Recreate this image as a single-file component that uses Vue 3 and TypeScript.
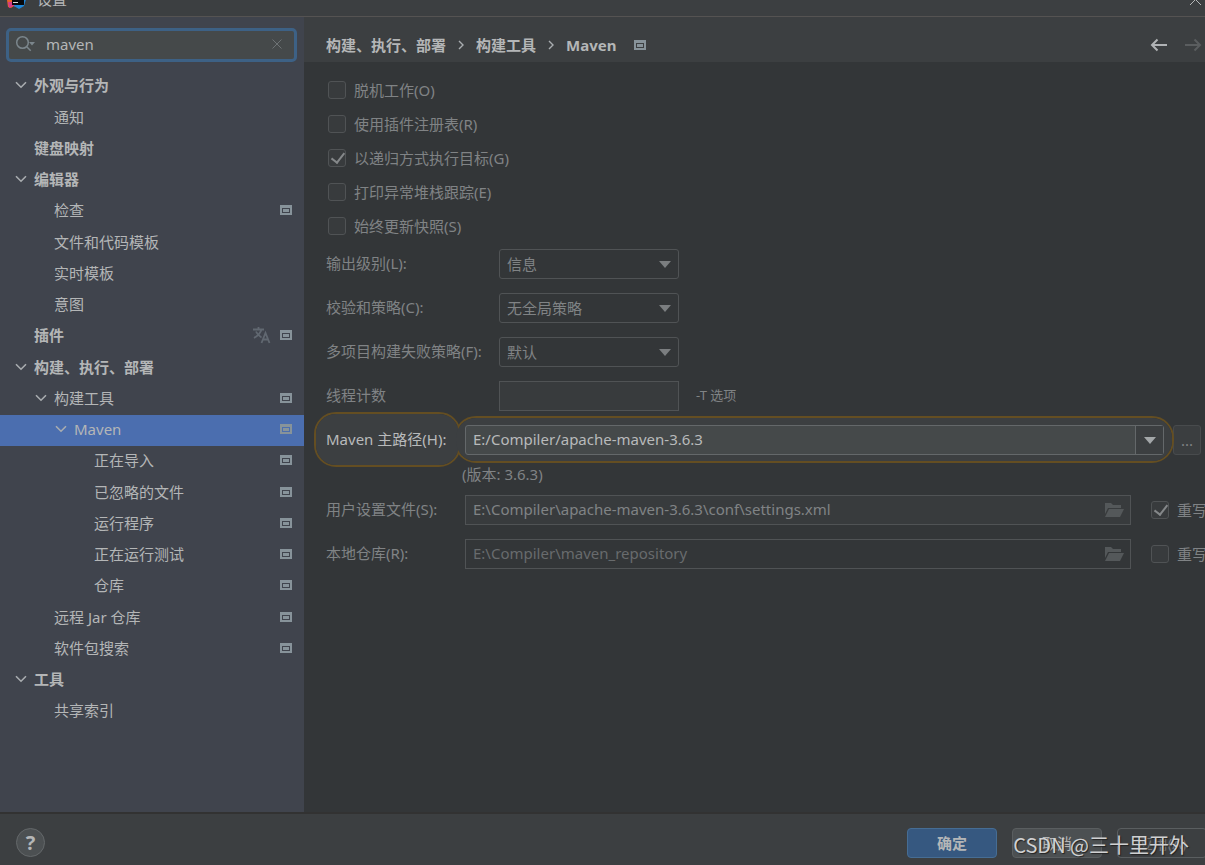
<script setup lang="ts">
import { ref } from 'vue'

interface TreeItem {
  label: string
  level: number
  open?: boolean
  project?: boolean
  translate?: boolean
}

const query = ref('maven')
const selected = ref('Maven')
const mavenHome = ref('E:/Compiler/apache-maven-3.6.3')

const tree: TreeItem[] = [
  { label: '外观与行为', level: 0, open: true },
  { label: '通知', level: 1 },
  { label: '键盘映射', level: 0 },
  { label: '编辑器', level: 0, open: true },
  { label: '检查', level: 1, project: true },
  { label: '文件和代码模板', level: 1 },
  { label: '实时模板', level: 1 },
  { label: '意图', level: 1 },
  { label: '插件', level: 0, project: true, translate: true },
  { label: '构建、执行、部署', level: 0, open: true },
  { label: '构建工具', level: 1, open: true, project: true },
  { label: 'Maven', level: 2, open: true, project: true },
  { label: '正在导入', level: 3, project: true },
  { label: '已忽略的文件', level: 3, project: true },
  { label: '运行程序', level: 3, project: true },
  { label: '正在运行测试', level: 3, project: true },
  { label: '仓库', level: 3, project: true },
  { label: '远程 Jar 仓库', level: 1, project: true },
  { label: '软件包搜索', level: 1, project: true },
  { label: '工具', level: 0, open: true },
  { label: '共享索引', level: 1 },
]

const options = [
  { label: '脱机工作(O)', checked: false },
  { label: '使用插件注册表(R)', checked: false },
  { label: '以递归方式执行目标(G)', checked: true },
  { label: '打印异常堆栈跟踪(E)', checked: false },
  { label: '始终更新快照(S)', checked: false },
]

const selects = [
  { id: 'output', label: '输出级别(L):', value: '信息' },
  { id: 'checksum', label: '校验和策略(C):', value: '无全局策略' },
  { id: 'failure', label: '多项目构建失败策略(F):', value: '默认' },
]

const files = [
  { id: 'settings', label: '用户设置文件(S):', value: 'E:\\Compiler\\apache-maven-3.6.3\\conf\\settings.xml', override: true },
  { id: 'repository', label: '本地仓库(R):', value: 'E:\\Compiler\\maven_repository', override: false },
]
</script>

<template>
  <div class="window">
    <header class="titlebar">
      <svg class="logo" width="20" height="20" viewBox="0 0 20 20" aria-hidden="true">
        <path d="M0 4 8 0v16l-4 3-3-1L0 11z" fill="#e8622a" />
        <path d="M1 13h6l3 5-4-1-4 2z" fill="#d43a86" />
        <path d="M10 0l7 3 3 4-3 10-5 3-5-3z" fill="#1d86d6" />
        <path d="M5 3h12v13H5z" fill="#08080a" />
        <path d="M6 13h5v1H6z" fill="#d8d8d8" />
      </svg>
      <span class="title">设置</span>
      <button class="close" aria-label="关闭">
        <svg width="13" height="13" viewBox="0 0 13 13"><path d="M1 1l11 11M12 1 1 12" /></svg>
      </button>
    </header>

    <div class="body">
      <aside class="sidebar">
        <div class="search">
          <svg class="lens" width="22" height="18" viewBox="0 0 22 18" aria-hidden="true">
            <circle cx="7.5" cy="7.5" r="5.8" />
            <path d="M11.7 11.7l4 4" />
            <path class="tri" d="M14 7h6l-3 3.500z" />
          </svg>
          <input v-model="query" type="text" aria-label="搜索设置" />
          <button aria-label="清除" @click="query = ''">
            <svg width="12" height="12" viewBox="0 0 12 12"><path d="M1.500 1.500l9 9M10.500 1.500l-9 9" /></svg>
          </button>
        </div>
        <ul class="tree">
          <li v-for="item in tree" :key="item.label">
            <button
              :class="['node', 'level-' + item.level, { selected: item.label === selected }]"
              @click="selected = item.label"
            >
              <span class="slot">
                <svg v-if="item.open" width="12" height="8" viewBox="0 0 12 8"><path d="M1 1.200 6 6.200l5-5" /></svg>
              </span>
              <span class="name">{{ item.label }}</span>
              <svg v-if="item.translate" class="translate" width="18" height="18" viewBox="0 0 18 18">
                <path d="M0 3.500h11M5.500 1v2.500M8.500 3.500C7.500 7 4.500 10 1 12M3 5.500c1 2.500 3 4.500 5.500 6M8.500 17l4-10 4 10M10 13.500h5" />
              </svg>
              <svg v-if="item.project" class="project" width="12" height="10" viewBox="0 0 12 10">
                <path class="frame" d="M0 0h12v10H0zM2 3v5h8V3zM3 4h6v3H3z" />
              </svg>
            </button>
          </li>
        </ul>
      </aside>

      <main class="content">
        <nav class="crumbs" aria-label="路径">
          <a href="#build">构建、执行、部署</a>
          <svg class="sep" width="6" height="10" viewBox="0 0 6 10"><path d="M1 1l4 4-4 4" /></svg>
          <a href="#tools">构建工具</a>
          <svg class="sep" width="6" height="10" viewBox="0 0 6 10"><path d="M1 1l4 4-4 4" /></svg>
          <a href="#maven">Maven</a>
          <svg class="project" width="12" height="10" viewBox="0 0 12 10">
            <path class="frame" d="M0 0h12v10H0zM2 3v5h8V3zM3 4h6v3H3z" />
          </svg>
          <span class="history">
            <button aria-label="后退">
              <svg width="18" height="14" viewBox="0 0 18 14"><path d="M17 7H2M7.500 1.500 2 7l5.500 5.500" /></svg>
            </button>
            <button aria-label="前进" disabled>
              <svg width="18" height="14" viewBox="0 0 18 14"><path d="M1 7h15M10.500 1.500 16 7l-5.500 5.500" /></svg>
            </button>
          </span>
        </nav>

        <form class="form" @submit.prevent>
          <div class="checks">
            <label v-for="o in options" :key="o.label" class="check">
              <input type="checkbox" :checked="o.checked" disabled />
              <span>{{ o.label }}</span>
            </label>
          </div>

          <div class="rows">
            <div v-for="s in selects" :key="s.id" class="row">
              <label class="wide" :for="s.id">{{ s.label }}</label>
              <div class="select">
                <select :id="s.id" disabled>
                  <option>{{ s.value }}</option>
                </select>
                <svg width="12" height="7" viewBox="0 0 12 7" aria-hidden="true"><path d="M0 0h12L6 7z" /></svg>
              </div>
            </div>
            <div class="row">
              <label class="wide" for="threads">线程计数</label>
              <input id="threads" class="threads" type="text" disabled />
              <span class="hint">-T 选项</span>
            </div>
            <div class="row home">
              <span class="ring ring-label"></span>
              <span class="ring ring-field"></span>
              <span class="fill fill-label"></span>
              <span class="fill fill-field"></span>
              <label for="home">Maven 主路径(H):</label>
              <div class="combo">
                <input id="home" v-model="mavenHome" type="text" />
                <button aria-label="展开">
                  <svg width="12" height="7" viewBox="0 0 12 7"><path d="M0 0h12L6 7z" /></svg>
                </button>
              </div>
              <button class="browse">...</button>
            </div>
          </div>

          <p class="version">(版本: 3.6.3)</p>

          <div class="rows">
            <div v-for="f in files" :key="f.id" class="row">
              <label :for="f.id">{{ f.label }}</label>
              <div :class="['path', { active: f.override }]">
                <input :id="f.id" type="text" :value="f.value" disabled />
                <svg width="20" height="16" viewBox="0 0 20 16" aria-hidden="true">
                  <path d="M1 1h6l2 2h8v3H4l-3 6z" />
                  <path d="M5 7h15l-4 8H1z" />
                </svg>
              </div>
              <label class="check override">
                <input type="checkbox" :checked="f.override" disabled />
                <span>重写</span>
              </label>
            </div>
          </div>
        </form>
      </main>
    </div>

    <footer class="footer">
      <button class="help" aria-label="帮助">?</button>
      <div class="actions">
        <button class="primary">确定</button>
        <button class="cancel">取消</button>
        <button class="apply" disabled>应用(A)</button>
      </div>
      <span class="mark">CSDN @三十里开外</span>
    </footer>
  </div>
</template>

<style>
body {
  margin: 0;
  background: #3c3f41;
}
</style>

<style scoped>
* {
  box-sizing: border-box;
}
.window {
  display: flex;
  flex-direction: column;
  height: 100vh;
  overflow: hidden;
  background: #3c3f41;
  color: #b4b6b7;
  font: 15px/20px "Noto Sans", "Noto Sans CJK SC", sans-serif;
}
button,
input,
select {
  font: inherit;
  color: inherit;
  margin: 0;
  padding: 0;
  border: 0;
  border-radius: 0;
  background: none;
  outline: none;
}
svg {
  flex: none;
  display: block;
  fill: none;
  stroke: none;
}

.titlebar {
  display: flex;
  align-items: flex-end;
  flex: none;
  height: 17px;
  padding: 0 3px 7px 7px;
  overflow: hidden;
  border-bottom: 1px solid #555352;
}
.title {
  margin-left: 10px;
}
.close {
  margin: 0 0 3px auto;
}
.close svg {
  stroke: #b4b6b7;
}

.body {
  display: flex;
  flex: 1;
  min-height: 0;
}
.sidebar {
  flex: none;
  width: 304px;
  background: #40444d;
}
.search {
  display: flex;
  align-items: center;
  height: 34px;
  margin: 11px 7px 9px 6px;
  padding: 0 9px 2px 6px;
  border: 3px solid #3d6185;
  border-radius: 5px;
  background: #45494a;
}
.lens {
  stroke: #7b868c;
  stroke-width: 1.5;
}
.lens .tri {
  fill: #7b868c;
  stroke: none;
}
.search input {
  flex: 1;
  min-width: 0;
  margin-left: 9px;
}
.search button {
  padding: 2px;
}
.search button svg {
  stroke: #6d7274;
}

.tree {
  margin: 0;
  padding: 0;
  list-style: none;
}
.tree li {
  height: 31px;
}
.tree li:nth-child(4n + 1) {
  height: 32px;
}
.node {
  display: flex;
  align-items: center;
  width: 100%;
  height: 31px;
  padding-right: 12px;
  padding-bottom: 4px;
  text-align: left;
}
.node.selected {
  background: #4b6eaf;
}
.level-0 {
  padding-left: 14px;
  font-weight: 700;
}
.level-1 {
  padding-left: 34px;
}
.level-2 {
  padding-left: 54px;
}
.level-3 {
  padding-left: 74px;
}
.slot {
  width: 14px;
  margin-right: 6px;
  padding-left: 1px;
}
.slot svg {
  stroke: #a9adb0;
  stroke-width: 1.6;
}
.name {
  flex: 1;
}
.translate {
  margin-right: 9px;
  stroke: #616871;
  stroke-width: 1.8;
}
.frame {
  fill: #87939a;
  fill-rule: evenodd;
}

.content {
  flex: 1;
  min-width: 0;
  overflow: hidden;
  background: #333638;
}
.crumbs {
  display: flex;
  align-items: center;
  height: 45px;
  padding: 10px 3px 0 22px;
  background: #3c3f41;
  font-weight: 700;
}
.crumbs a {
  color: inherit;
  text-decoration: none;
}
.sep {
  margin: 0 12px;
  stroke: #a9adb0;
  stroke-width: 1.4;
}
.crumbs .project {
  margin-left: 18px;
}
.history {
  display: flex;
  gap: 16px;
  margin-left: auto;
}
.history svg {
  stroke: #b0b3b5;
  stroke-width: 2;
}
.history button:disabled svg {
  stroke: #5a5d5f;
}

.form {
  padding: 11px 0 0 22px;
  color: #808385;
}
.checks {
  padding: 0 0 6px 2px;
}
.check {
  display: flex;
  align-items: center;
  gap: 8px;
  height: 34px;
  white-space: nowrap;
}
.check input {
  flex: none;
  appearance: none;
  width: 18px;
  height: 18px;
  border: 1px solid #505355;
  border-radius: 3px;
  background: #383b3d;
}
.check input:checked::after {
  content: "";
  display: block;
  width: 6px;
  height: 11px;
  margin: 0 0 0 5px;
  border: solid #85888a;
  border-width: 0 2px 2px 0;
  transform: rotate(38deg);
}
.rows {
  display: flex;
  flex-direction: column;
  gap: 14px;
}
.row {
  display: flex;
  align-items: center;
  height: 30px;
}
.row > label:first-of-type {
  flex: none;
  width: 139px;
  padding-bottom: 2px;
}
.row > label.wide:first-of-type {
  width: 173px;
}
.select {
  display: grid;
  align-items: center;
  width: 180px;
}
.select select {
  grid-area: 1 / 1;
  appearance: none;
  height: 30px;
  padding: 0 30px 0 7px;
  border: 1px solid #505355;
  border-radius: 3px;
  opacity: 1;
}
.select svg {
  grid-area: 1 / 1;
  justify-self: end;
  margin-right: 8px;
  fill: #7b7e80;
  pointer-events: none;
}
.threads {
  width: 180px;
  height: 30px;
  border: 1px solid #505355;
  background: #383b3d;
}
.hint {
  margin-left: 17px;
  padding-bottom: 2px;
  font-size: 13px;
}

.home {
  position: relative;
}
.home > label {
  position: relative;
  z-index: 2;
  color: #b8babb;
}
.ring,
.fill {
  position: absolute;
}
.ring {
  z-index: 1;
  border: 2px solid #644e22;
  border-radius: 22px;
  pointer-events: none;
}
.fill {
  z-index: 1;
  border-radius: 20px;
  background: #3c3f41;
}
.ring-label {
  top: -13px;
  bottom: -12px;
  left: -12px;
  width: 147px;
}
.fill-label {
  top: -11px;
  bottom: -10px;
  left: -10px;
  width: 143px;
}
.ring-field {
  top: -9px;
  bottom: -8px;
  left: 128px;
  right: 31px;
}
.fill-field {
  top: -7px;
  bottom: -6px;
  left: 130px;
  right: 33px;
}
.combo {
  position: relative;
  z-index: 2;
  display: flex;
  flex: 1;
  min-width: 0;
  height: 30px;
  border: 1px solid #64686a;
  border-radius: 3px;
  background: #45494a;
  color: #b8babb;
}
.combo input {
  flex: 1;
  min-width: 0;
  padding: 0 0 3px 7px;
}
.combo button {
  display: grid;
  place-items: center;
  width: 28px;
  border-left: 1px solid #64686a;
  background: #3c3f41;
}
.combo svg {
  fill: #a3a7a9;
}
.browse {
  width: 28px;
  height: 30px;
  margin: 0 4px 0 9px;
  border: 1px solid #484b4d;
  border-radius: 3px;
  background: #3b3e40;
}
.version {
  margin: 0;
  padding: 0 0 2px 136px;
  line-height: 38px;
}
.path {
  display: flex;
  align-items: center;
  flex: 1;
  min-width: 0;
  height: 30px;
  padding: 0 6px 0 7px;
  border: 1px solid #505355;
  color: #686b6d;
}
.path.active {
  background: #383b3d;
  color: #808385;
}
.path input {
  flex: 1;
  min-width: 0;
  padding-bottom: 2px;
}
.path svg {
  fill: #54585a;
}
.override {
  flex: none;
  width: 54px;
  margin-left: 20px;
  overflow: hidden;
}

.footer {
  position: relative;
  display: flex;
  align-items: center;
  flex: none;
  height: 53px;
  padding: 6px 0 0 16px;
  border-top: 2px solid #323232;
  overflow: hidden;
}
.help {
  width: 29px;
  height: 29px;
  border: 1px solid #64686a;
  border-radius: 50%;
  background: #4c5052;
  font-size: 20px;
  font-weight: 700;
}
.actions {
  display: flex;
  gap: 15px;
  margin: 0 -2px 0 auto;
}
.actions button {
  width: 90px;
  height: 30px;
  border: 1px solid #5a5e60;
  border-radius: 4px;
  background: #4c5052;
}
.actions .primary {
  border-color: #466d94;
  background: #365880;
  font-weight: 700;
}
.actions .apply {
  background: none;
  color: #74777a;
}
.mark {
  position: absolute;
  right: 16px;
  bottom: 5px;
  color: #d0d1d2;
  font-family: "Noto Sans CJK SC", sans-serif;
  font-size: 20px;
  line-height: 30px;
  text-shadow: 1px 1px 1px #222;
  pointer-events: none;
}
</style>
